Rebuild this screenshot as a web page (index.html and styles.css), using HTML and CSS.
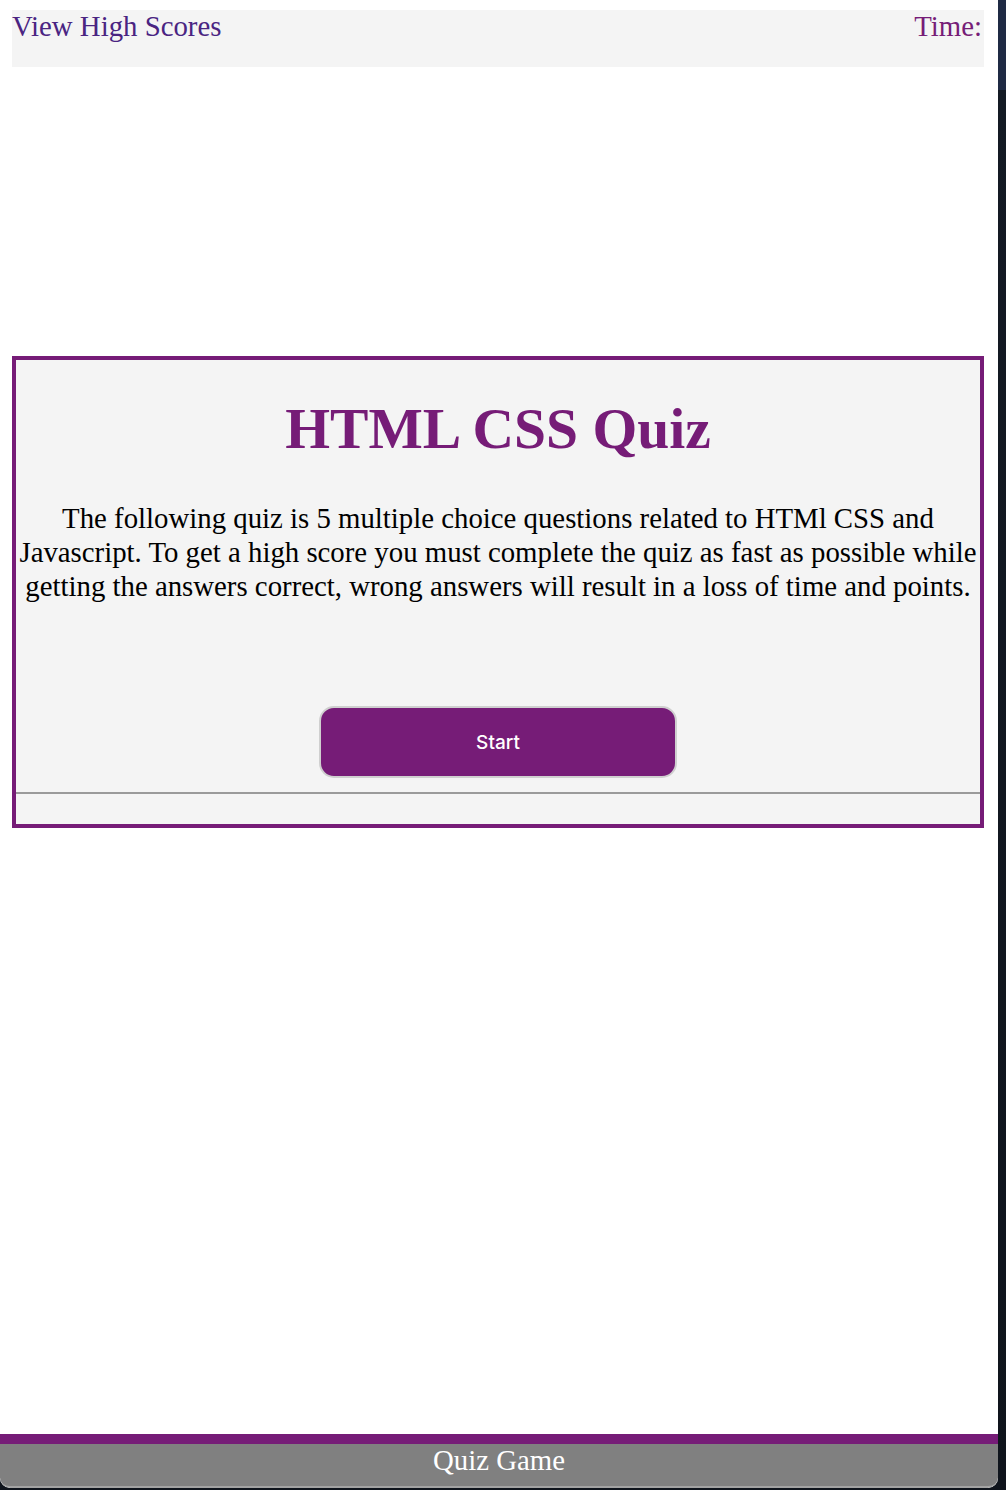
FILE: index.html
```html
<!DOCTYPE html>
<html lang="en">
<head>
<meta charset="utf-8">
<title>Quiz Game</title>
<link rel="stylesheet" href="styles.css">
</head>
<body>
<div class="window">
  <header class="topbar">
    <a class="scores-link" href="#">View High Scores</a>
    <span class="timer">Time:</span>
  </header>
  <main class="card">
    <h1 class="title">HTML CSS Quiz</h1>
    <p class="intro">The following quiz is 5 multiple choice questions related to HTMl CSS and Javascript. To get a high score you must complete the quiz as fast as possible while getting the answers correct, wrong answers will result in a loss of time and points.</p>
    <div class="actions">
      <button class="start-btn" type="button">Start</button>
    </div>
    <hr class="divider">
  </main>
  <footer class="footer">Quiz Game</footer>
</div>
</body>
</html>
```

FILE: styles.css
```css
html, body {
  margin: 0;
  padding: 0;
}

body {
  background: linear-gradient(to bottom, #1f2a44 0, #1f2a44 90px, #141a24 90px, #0f141c 100%);
  font-family: "Liberation Serif", "Times New Roman", serif;
  width: 1006px;
  height: 1490px;
  overflow: hidden;
}

.window {
  width: 998px;
  height: 1488px;
  background: #ffffff;
  display: flex;
  flex-direction: column;
  border-radius: 0 0 10px 10px;
  overflow: hidden;
}

.topbar {
  margin: 10px 14px 0 12px;
  height: 57px;
  background: #f4f4f4;
  display: flex;
  justify-content: space-between;
  align-items: flex-start;
  font-size: 28.8px;
  line-height: 33px;
}

.scores-link {
  color: #4a2482;
  text-decoration: none;
}

.timer {
  color: #761c77;
  margin-right: 2px;
}

.card {
  margin: 289px 14px 0 12px;
  border: 4px solid #761c77;
  background: #f4f4f4;
  padding: 0 0 30px;
}

.title {
  margin: 36px 0 0;
  text-align: center;
  color: #761c77;
  font-size: 57.6px;
  line-height: 66px;
  font-weight: bold;
}

.intro {
  margin: 39px 0 0;
  text-align: center;
  color: #000000;
  font-size: 28.8px;
  line-height: 34px;
}

.actions {
  display: flex;
  justify-content: center;
  margin-top: 103px;
}

.start-btn {
  width: 358px;
  height: 72px;
  background: #761c77;
  color: #ffffff;
  border: 2px solid #cfcfcf;
  border-radius: 15px;
  font-family: Inter, "Noto Sans", sans-serif;
  font-size: 19px;
  font-weight: 500;
}

.divider {
  margin: 14px 0 0;
  border: 0;
  border-top: 2px solid #9a9a9a;
  height: 0;
}

.footer {
  margin-top: auto;
  border-top: 10px solid #761c77;
  background: #808080;
  color: #ffffff;
  text-align: center;
  font-size: 28.8px;
  line-height: 32px;
  height: 42px;
  border-bottom: 2px solid #a3a3a3;
  border-radius: 0 0 10px 10px;
}
```
